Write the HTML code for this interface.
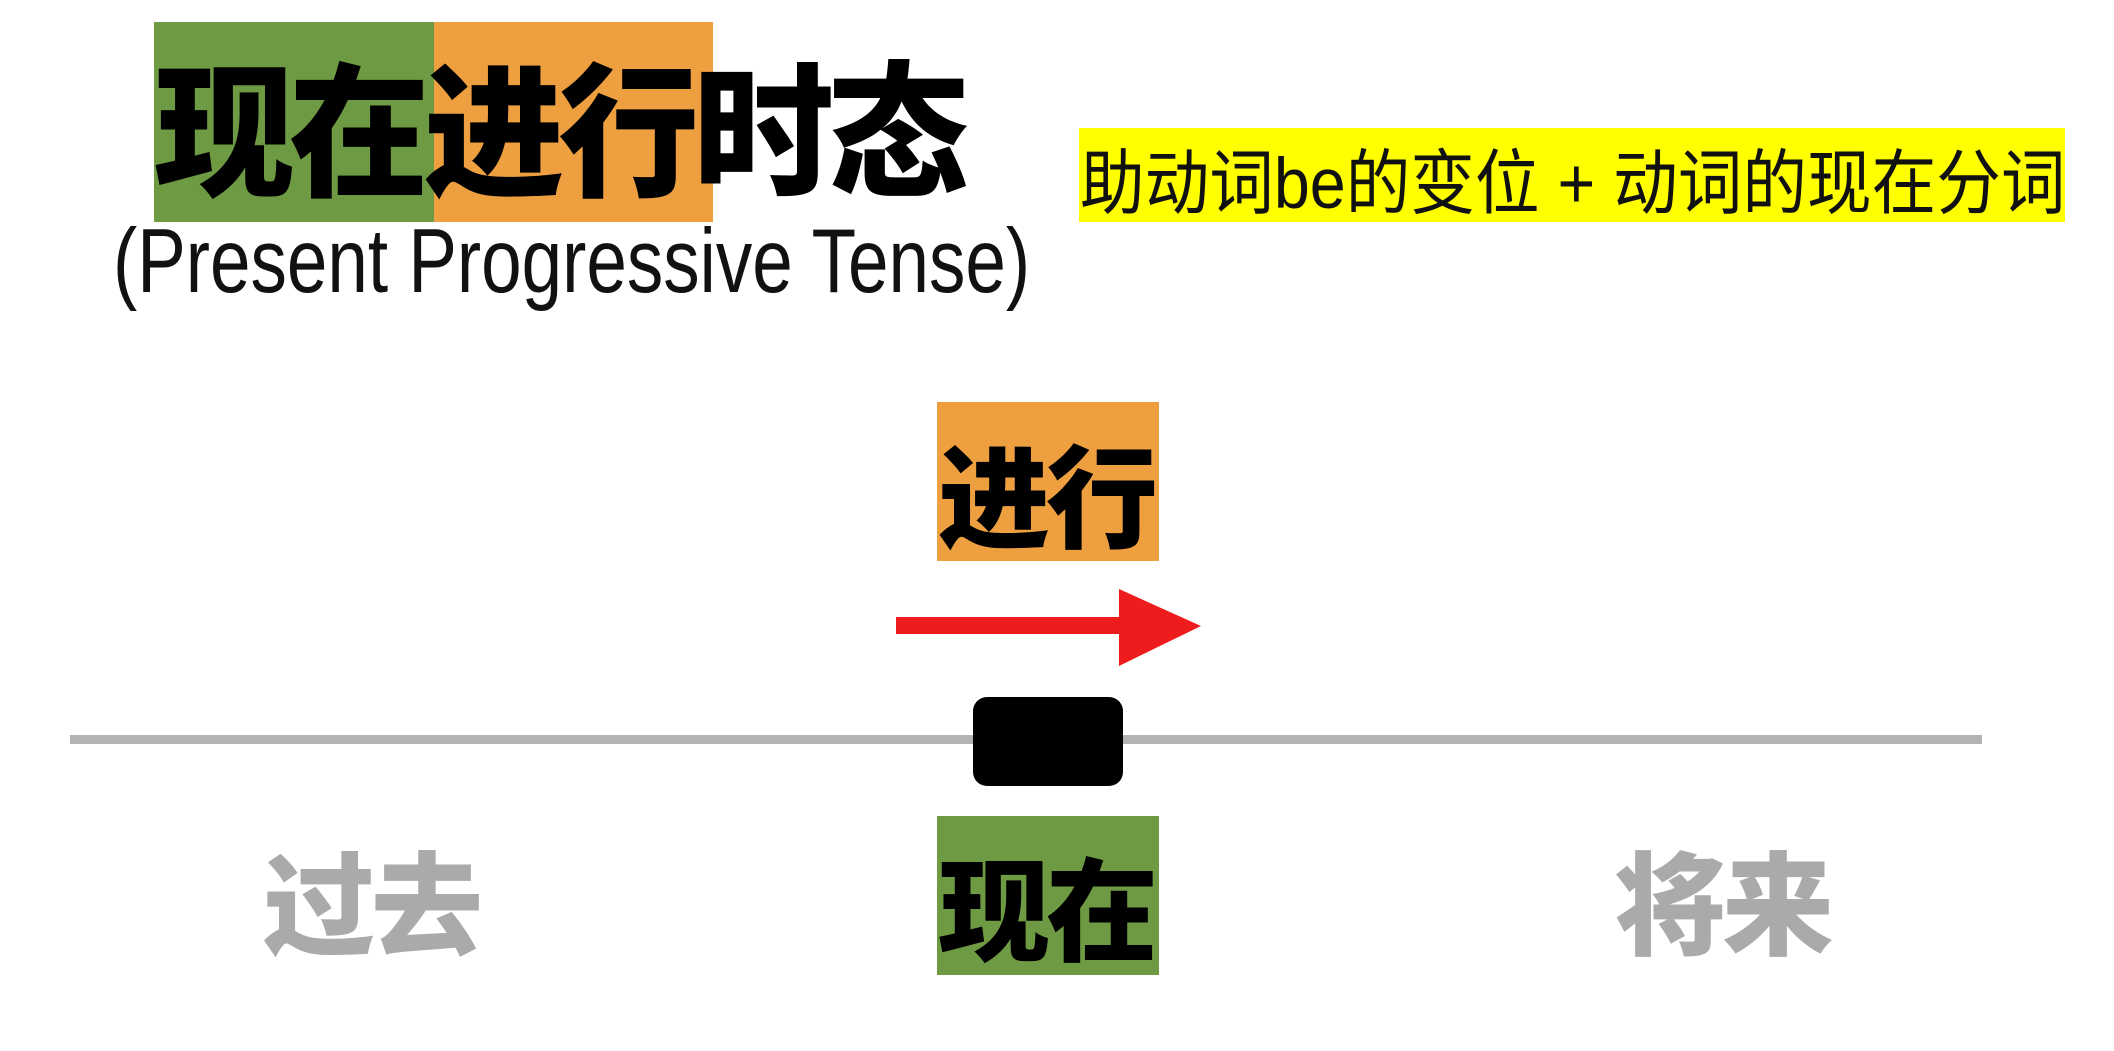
<!DOCTYPE html>
<html><head><meta charset="utf-8"><style>
body{margin:0;width:2114px;height:1051px;background:#fff;position:relative;overflow:hidden}
.a{position:absolute}
.cj{font-family:"Liberation Sans","Noto Sans CJK SC",sans-serif;font-weight:900;line-height:1;white-space:nowrap}
</style></head><body>
<div class="a" style="left:154px;top:22px;width:280px;height:200px;background:#6e9a44"></div>
<div class="a" style="left:434px;top:22px;width:279px;height:200px;background:#eea041"></div>
<div class="a cj" style="left:154px;top:63px;font-size:145px;letter-spacing:-6px;color:#000;transform:scaleX(0.97);transform-origin:left">现在进行时态</div>
<div class="a" style="left:113px;top:212px;font-family:'Liberation Sans','Noto Sans CJK SC',sans-serif;font-size:91px;line-height:1.1;color:#111;white-space:nowrap;transform:scaleX(0.80);transform-origin:left">(Present Progressive Tense)</div>
<div class="a" style="left:1079px;top:128px;width:986px;height:94px;background:#ffff00"></div>
<div class="a" style="left:1080px;top:149px;font-family:'Liberation Sans','Noto Sans CJK SC',sans-serif;font-size:71px;line-height:1;color:#111;white-space:nowrap;transform:scaleX(0.91);transform-origin:left">助动词be的变位 + 动词的现在分词</div>
<div class="a" style="left:937px;top:402px;width:222px;height:159px;background:#eea041"></div>
<div class="a cj" style="left:938px;top:445px;font-size:112px;letter-spacing:-4px">进行</div>
<svg class="a" style="left:0;top:0" width="2114" height="1051">
<rect x="896" y="617" width="228" height="17" fill="#ee1c1c"/>
<polygon points="1119,589 1201,626 1119,666" fill="#ee1c1c"/>
<rect x="70" y="735" width="1912" height="9" fill="#b3b3b3"/>
<rect x="973" y="697" width="150" height="89" rx="14" fill="#000"/>
</svg>
<div class="a" style="left:937px;top:816px;width:222px;height:159px;background:#6e9a44"></div>
<div class="a cj" style="left:938px;top:858px;font-size:112px;letter-spacing:-4px">现在</div>
<div class="a cj" style="left:263px;top:852px;font-size:112px;letter-spacing:-4px;color:#aaa">过去</div>
<div class="a cj" style="left:1614px;top:852px;font-size:112px;letter-spacing:-4px;color:#aaa">将来</div>
</body></html>
